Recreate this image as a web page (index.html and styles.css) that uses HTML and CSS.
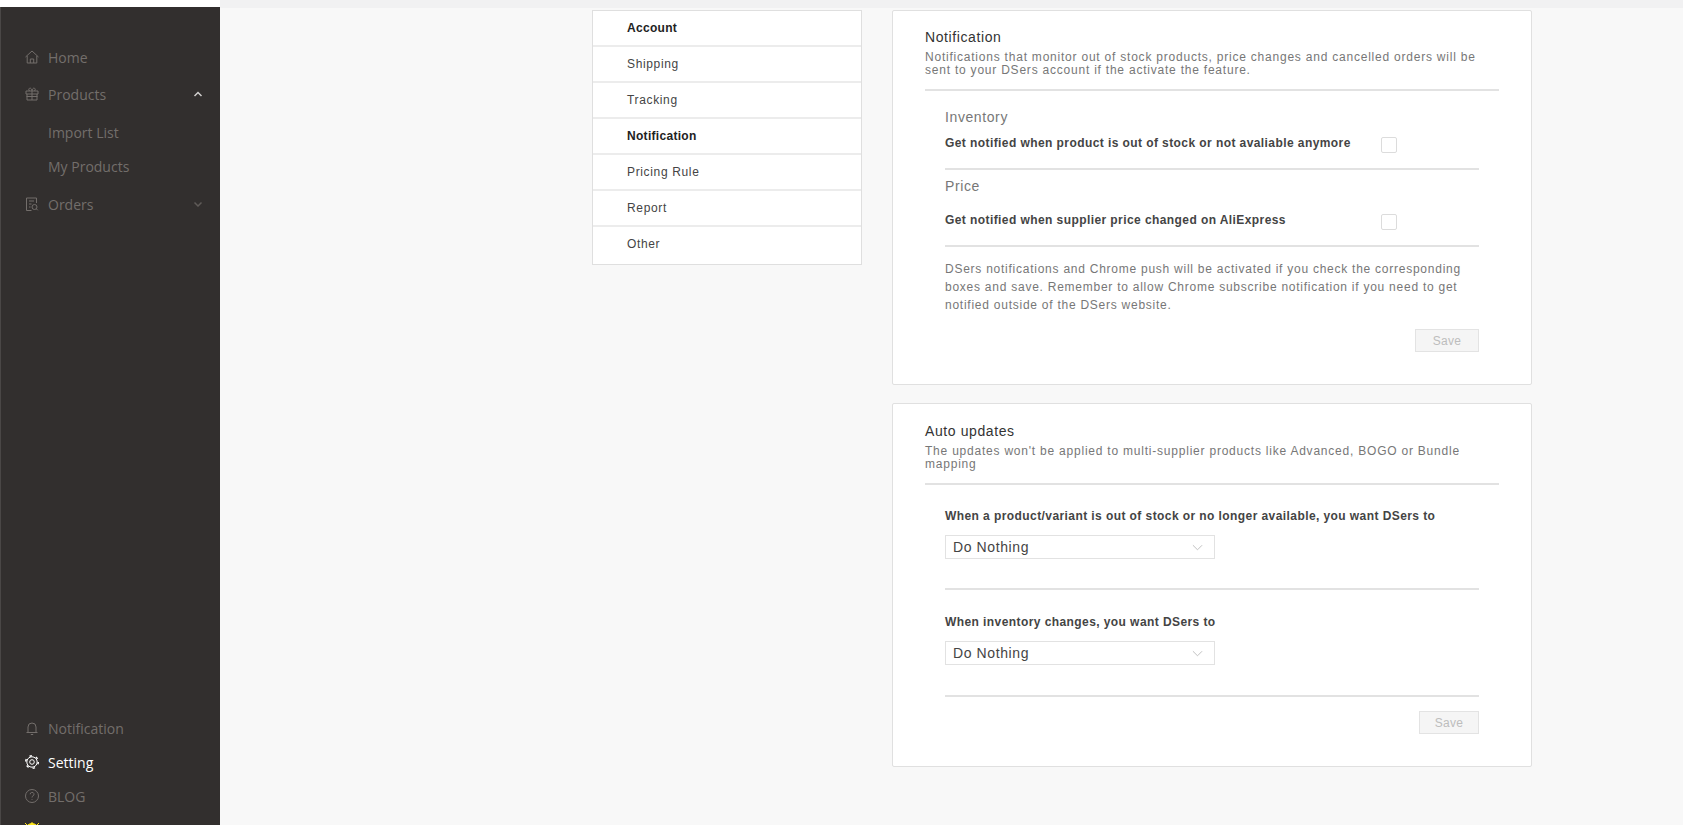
FILE: index.html
```html
<!DOCTYPE html>
<html lang="en">
<head>
<meta charset="utf-8">
<title>DSers Setting</title>
<link rel="stylesheet" href="styles.css">
</head>
<body>
<div class="page">
  <aside class="sidebar">
    <nav class="nav">
      <a class="item"><svg class="icon" viewBox="0 0 16 16"><path d="M1.500 8 8 2l6.500 6M3.200 7v7h9.600V7M6.300 14v-4h3.400v4"/></svg>Home</a>
      <a class="item"><svg class="icon" viewBox="0 0 16 16"><path d="M2 5h12v3H2zM3 8v6h10V8M8 5v9M2.500 10.500h11M5.500 5C4 3.500 5 1.800 6.500 2.200 7.500 2.500 8 5 8 5s.5-2.500 1.500-2.800C11 1.800 12 3.500 10.500 5"/></svg>Products<svg class="caret up" viewBox="0 0 10 6"><path d="M1.500 5 5 1.500 8.500 5"/></svg></a>
      <div class="sub">
        <a class="item sub-item">Import List</a>
        <a class="item sub-item">My Products</a>
      </div>
      <a class="item"><svg class="icon" viewBox="0 0 16 16"><path d="M12.500 7V2h-10v12.500h5M5 5h5M5 8h2.500M5 11h1.500"/><circle cx="10.500" cy="11" r="2.500"/><path d="m12.300 12.800 1.500 1.500"/></svg>Orders<svg class="caret" viewBox="0 0 10 6"><path d="M1.500 1.500 5 5l3.500-3.500"/></svg></a>
    </nav>
    <nav class="nav-bottom">
      <a class="item"><svg class="icon" viewBox="0 0 16 16"><path d="M4 12V7a4 4 0 0 1 8 0v5M2.500 12.500h11M6.800 14.500h2.400"/></svg>Notification</a>
      <a class="item active"><svg class="icon" viewBox="0 0 16 16"><circle cx="8" cy="8" r="5.200"/><circle class="gear-teeth" cx="8" cy="8" r="6.300"/><circle cx="8" cy="8" r="2.300"/></svg>Setting</a>
      <a class="item"><svg class="icon" viewBox="0 0 16 16"><circle cx="8" cy="8" r="6.500"/><path d="M6.200 6.300a1.900 1.900 0 1 1 2.800 1.600c-.7.400-1 .8-1 1.600M8 11v.8"/></svg>BLOG</a>
      <a class="item"><svg class="icon sun" viewBox="0 0 16 16"><circle cx="8" cy="8" r="6.500"/><path d="M8 0v2M1 1l2 2M15 1l-2 2"/></svg></a>
    </nav>
  </aside>
  <main class="main">
    <ul class="menu">
      <li class="menu-row strong">Account</li>
      <li class="menu-row">Shipping</li>
      <li class="menu-row">Tracking</li>
      <li class="menu-row strong">Notification</li>
      <li class="menu-row">Pricing Rule</li>
      <li class="menu-row">Report</li>
      <li class="menu-row">Other</li>
    </ul>
    <div class="cards">
      <section class="card card-notify">
        <header class="card-head">
          <h2 class="card-title">Notification</h2>
          <p class="card-desc">Notifications that monitor out of stock products, price changes and cancelled orders will be sent to your DSers account if the activate the feature.</p>
        </header>
        <div class="card-body">
          <h3 class="group-title">Inventory</h3>
          <div class="check-row check-row-first">
            <span class="label">Get notified when product is out of stock or not avaliable anymore</span>
            <span class="checkbox"></span>
          </div>
          <h3 class="group-title group-title-next">Price</h3>
          <div class="check-row check-row-second">
            <span class="label">Get notified when supplier price changed on AliExpress</span>
            <span class="checkbox"></span>
          </div>
          <p class="note">DSers notifications and Chrome push will be activated if you check the corresponding boxes and save. Remember to allow Chrome subscribe notification if you need to get notified outside of the DSers website.</p>
          <div class="actions"><button class="save save-wide">Save</button></div>
        </div>
      </section>
      <section class="card card-auto">
        <header class="card-head">
          <h2 class="card-title">Auto updates</h2>
          <p class="card-desc">The updates won't be applied to multi-supplier products like Advanced, BOGO or Bundle mapping</p>
        </header>
        <div class="card-body">
          <div class="field field-first">
            <span class="label">When a product/variant is out of stock or no longer available, you want DSers to</span>
            <div class="select">Do Nothing<svg class="chev" viewBox="0 0 12 7"><path d="M1 1l5 5 5-5"/></svg></div>
          </div>
          <div class="field">
            <span class="label">When inventory changes, you want DSers to</span>
            <div class="select">Do Nothing<svg class="chev" viewBox="0 0 12 7"><path d="M1 1l5 5 5-5"/></svg></div>
          </div>
          <div class="actions actions-tight"><button class="save save-narrow">Save</button></div>
        </div>
      </section>
    </div>
  </main>
</div>
</body>
</html>
```
FILE: styles.css
```css
* { box-sizing: border-box; }
html, body { margin: 0; height: 100%; overflow: hidden; }
body { background: #f8f8f8; font-family: "Liberation Sans", Arial, sans-serif; color: #333; }
.page { display: flex; height: 825px; overflow: hidden; }

.sidebar {
  width: 220px; flex: none; margin-top: 7px; background: #322f2e;
  border-left: 1px solid #4a4746; display: flex; flex-direction: column; overflow: hidden;
  box-shadow: 0 -7px 0 #fff; font-family: "Open Sans", sans-serif; padding-top: 33px;
}
.nav { display: flex; flex-direction: column; gap: 3px; }
.nav-bottom { display: flex; flex-direction: column; margin-top: auto; margin-bottom: -22px; }
.item { display: flex; align-items: center; height: 34px; padding-left: 23px; color: #736e6b; font-size: 14px; }
.item.active { color: #fff; }
.sub { display: flex; flex-direction: column; margin: 1px 0; }
.sub-item { padding-left: 47px; }
.icon { width: 16px; height: 16px; margin-right: 8px; flex: none; fill: none; stroke: currentColor; stroke-width: 1; }
.gear-teeth { stroke-width: 1.5; stroke-dasharray: 2.400 4.200; }
.sun { fill: #ffe81a; stroke: #ffe81a; }
.caret { width: 10px; height: 6px; margin-left: auto; margin-right: 17px; fill: none; stroke: #5f5b58; stroke-width: 1.5; }
.caret.up { stroke: #d0cecd; }

.main {
  flex: 1; display: flex; align-items: flex-start; gap: 30px; padding: 10px 0 0 372px;
  background: linear-gradient(#f1f1f2 8px, #f8f8f8 8px);
}
.menu {
  width: 270px; margin: 0; padding: 0; list-style: none; background: #fff; border: 1px solid #dfdfdf;
}
.menu-row {
  height: 36px; padding-left: 34px; display: flex; align-items: center; font-size: 12px;
  letter-spacing: .65px; color: #444; border-bottom: 2px solid #ececec;
}
.menu-row:last-child { border-bottom: 0; height: 37px; padding-bottom: 3px; }
.strong { font-weight: 700; color: #222; letter-spacing: .3px; }

.cards { width: 640px; display: flex; flex-direction: column; gap: 18px; }
.card { background: #fff; border: 1px solid #e0e0e0; border-radius: 2px; padding: 17px 32px 0; }
.card-notify { height: 375px; }
.card-auto { height: 364px; padding-top: 18px; }
.card-head { border-bottom: 2px solid #e2e2e2; height: 63px; }
.card-title { margin: 0; font-size: 14px; font-weight: 400; line-height: 19px; color: #333; letter-spacing: .6px; }
.card-desc { margin: 4px 0 0; font-size: 12px; line-height: 12.500px; color: #777; letter-spacing: .78px; width: 570px; }

.card-body { width: 534px; margin-left: 20px; }
.group-title { margin: 0; padding-top: 16px; font-size: 14px; line-height: 20px; font-weight: 400; color: #777; letter-spacing: .6px; }
.group-title-next { padding-top: 6px; }
.label { font-size: 12px; font-weight: 700; line-height: 16px; color: #444; letter-spacing: .42px; }
.check-row { display: flex; align-items: flex-start; justify-content: space-between; padding-right: 82px; border-bottom: 2px solid #e2e2e2; }
.check-row-first { height: 43px; padding-top: 8px; }
.check-row-second { height: 51px; padding-top: 16px; }
.checkbox { width: 16px; height: 16px; margin-top: 2px; border: 1px solid #dcdcdc; border-radius: 2px; background: #fff; }
.note { margin: 13px 0 0; font-size: 12px; line-height: 18px; color: #777; letter-spacing: .75px; }
.actions { display: flex; justify-content: flex-end; margin-top: 15px; }
.actions-tight { margin-top: 14px; }
.save { height: 23px; border: 1px solid #e3e3e3; background: #f5f5f5; color: #bdbdbd; font: 12px "Liberation Sans", Arial, sans-serif; padding: 0; letter-spacing: .3px; }
.save-wide { width: 64px; }
.save-narrow { width: 60px; }

.field { height: 107px; padding-top: 24px; border-bottom: 2px solid #e2e2e2; }
.field-first { height: 105px; padding-top: 23px; }
.field .label { display: block; }
.select {
  width: 270px; height: 24px; margin-top: 11px; padding: 0 11px 0 7px; border: 1px solid #e2e2e2; background: #fff;
  display: flex; align-items: center; justify-content: space-between; font-size: 14px; color: #444; letter-spacing: .6px;
}
.chev { width: 11px; height: 7px; fill: none; stroke: #bbb; stroke-width: 1; }
```
